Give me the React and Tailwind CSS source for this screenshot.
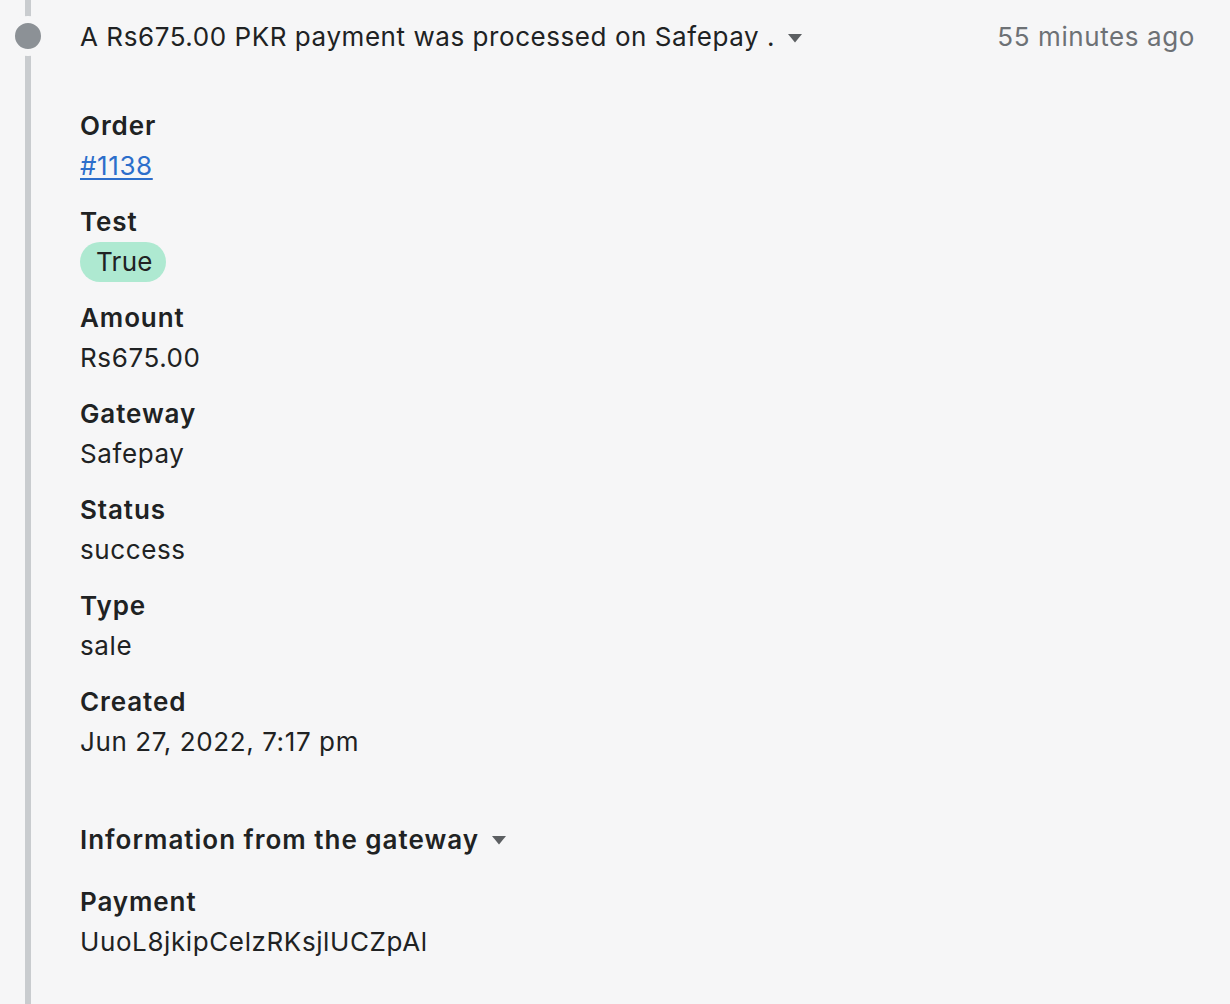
import React from "react";

const Caret = ({ className = "" }) => (
  <svg width="16" height="10" viewBox="0 0 16 10" className={className}>
    <path d="M1 1h14l-7 8.5z" fill="#5c5f62" />
  </svg>
);

const Field = ({ label, children }) => (
  <div className="flex flex-col">
    <div className="font-semibold text-[26px] leading-[40px] tracking-[0.9px] text-[#202223]">{label}</div>
    <div className="text-[26px] leading-[40px] tracking-[0.6px] text-[#202223]">{children}</div>
  </div>
);

export default function App() {
  return (
    <div
      className="w-[1230px] h-[1004px] bg-[#f6f6f7] overflow-hidden"
      style={{ fontFamily: "Inter, 'Noto Sans', sans-serif" }}
    >
      <div className="relative ml-[25px] h-full border-l-[6px] border-[#c9cccf] pl-[49px] pr-[35px]">
        <div className="absolute left-[-23px] top-[16px] w-[40px] h-[40px] rounded-full bg-[#8c9196] border-[7px] border-[#f6f6f7]" />
        <div className="flex items-center justify-between pt-[17px]">
          <div className="flex items-center h-[40px] text-[26px] leading-[40px] tracking-[0.56px] text-[#202223]">
            <span>A Rs675.00 PKR payment was processed on Safepay .</span>
            <Caret className="ml-[12px] mt-[2px]" />
          </div>
          <div className="text-[26px] leading-[40px] tracking-[0.6px] text-[#6d7175]">55 minutes ago</div>
        </div>
        <div className="flex flex-col gap-[16px] pt-[49px]">
          <Field label="Order">
            <a href="#" className="text-[#2c6ecb] underline underline-offset-[3px]">#1138</a>
          </Field>
          <Field label="Test">
            <span className="inline-flex items-center h-[40px] pl-[16px] pr-[13px] rounded-full bg-[#aee9d1] text-[#202223] tracking-[0.3px]">True</span>
          </Field>
          <Field label="Amount">Rs675.00</Field>
          <Field label="Gateway">Safepay</Field>
          <Field label="Status">success</Field>
          <Field label="Type">sale</Field>
          <Field label="Created">Jun 27, 2022, 7:17 pm</Field>
        </div>
        <div className="flex items-center mt-[57px] h-[40px] text-[26px] font-semibold tracking-[1px] text-[#202223]">
          <span>Information from the gateway</span>
          <Caret className="ml-[12px] mt-[2px]" />
        </div>
        <div className="mt-[23px]">
          <Field label="Payment">UuoL8jkipCelzRKsjlUCZpAl</Field>
        </div>
      </div>
    </div>
  );
}
